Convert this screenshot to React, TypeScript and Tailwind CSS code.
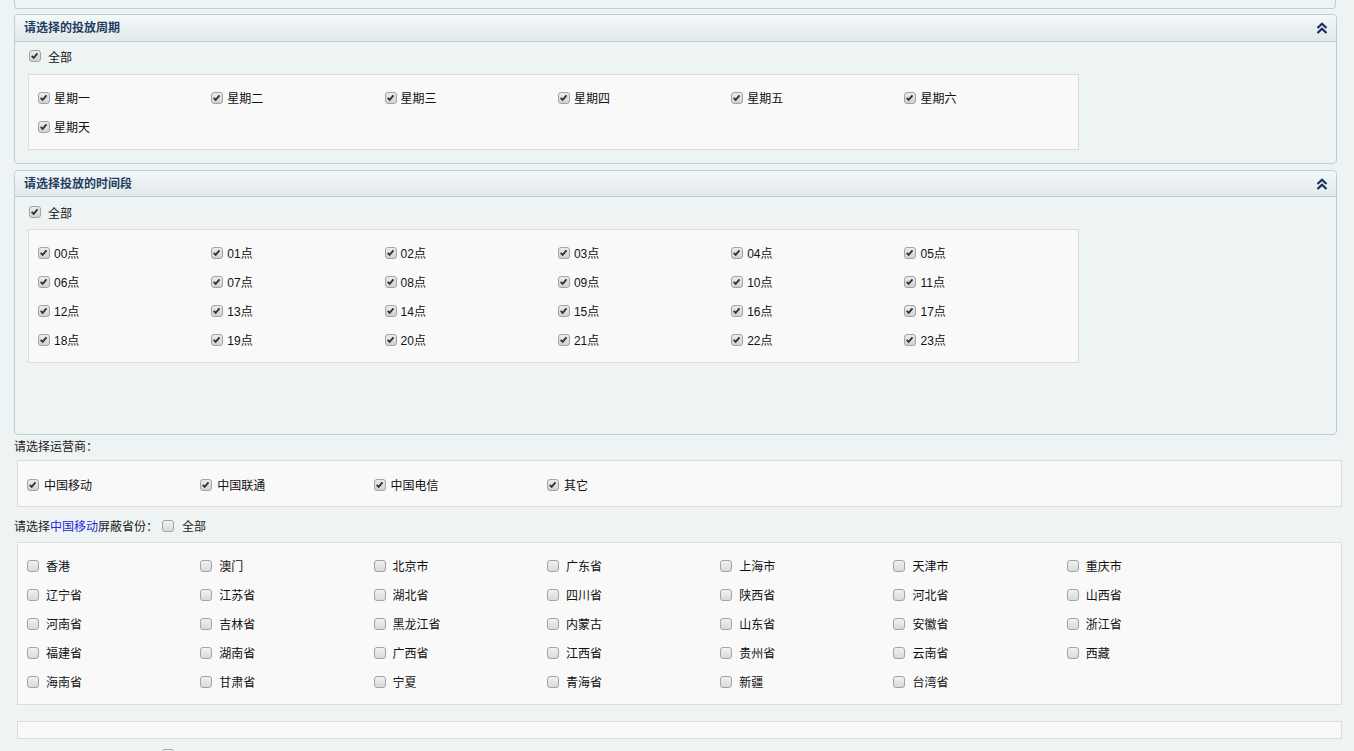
import React from "react";

const days = ["星期一", "星期二", "星期三", "星期四", "星期五", "星期六", "星期天"];
const hours = Array.from({ length: 24 }, (_, i) => `${String(i).padStart(2, "0")}点`);
const carriers = ["中国移动", "中国联通", "中国电信", "其它"];
const provinces = [
  "香港", "澳门", "北京市", "广东省", "上海市", "天津市", "重庆市",
  "辽宁省", "江苏省", "湖北省", "四川省", "陕西省", "河北省", "山西省",
  "河南省", "吉林省", "黑龙江省", "内蒙古", "山东省", "安徽省", "浙江省",
  "福建省", "湖南省", "广西省", "江西省", "贵州省", "云南省", "西藏",
  "海南省", "甘肃省", "宁夏", "青海省", "新疆", "台湾省",
];

function Box({ checked }: { checked?: boolean }) {
  return (
    <span
      className={
        "relative inline-block w-[12px] h-[12px] shrink-0 rounded-[3px] border border-[#a3a3a3] " +
        (checked
          ? "bg-gradient-to-b from-[#ececec] to-[#d2d2d2]"
          : "bg-gradient-to-b from-[#f1f1f1] to-[#dadada]")
      }
    >
      {checked && (
        <svg viewBox="0 0 12 12" className="absolute left-[0px] top-[0px] w-[10px] h-[10px]">
          <path d="M2 5.8 L4.4 8.2 L9 2.8" fill="none" stroke="#333" strokeWidth="2.2" />
        </svg>
      )}
    </span>
  );
}

function Item({ label, checked, gap }: { label: string; checked?: boolean; gap: string }) {
  return (
    <div className={"flex items-center h-[29px] " + gap}>
      <span className="-mt-[2px] flex">
        <Box checked={checked} />
      </span>
      <span className="leading-none whitespace-nowrap pt-[1px]">{label}</span>
    </div>
  );
}

function Chevrons() {
  return (
    <svg viewBox="0 0 12 12" className="w-[12px] h-[12px]">
      <polyline points="1.5,6 6,1.8 10.5,6" fill="none" stroke="#17305a" strokeWidth="2.2" />
      <polyline points="1.5,11 6,6.8 10.5,11" fill="none" stroke="#17305a" strokeWidth="2.2" />
    </svg>
  );
}

function Panel({
  title,
  items,
  head,
  body,
  gap,
}: {
  title: string;
  items: string[];
  head: string;
  body: string;
  gap: string;
}) {
  return (
    <div className="w-[1323px] border border-[#b7d1d7] rounded-[4px] bg-[#eef4f4]">
      <div
        className={
          "flex items-center justify-between pl-[9px] pr-[8px] border-b border-[#b7d1d7] rounded-t-[4px] bg-gradient-to-b from-[#f4f8f8] to-[#e1e9eb] " +
          head
        }
      >
        <span className="font-bold text-[12px] text-[#1f3d5e]">{title}</span>
        <Chevrons />
      </div>
      <div className={"flex flex-col " + body}>
        <div className={"flex items-center h-[20px] pl-[14px] gap-[7px] " + gap}>
          <span className="-mt-[2px] flex">
            <Box checked />
          </span>
          <span className="pt-[1px]">全部</span>
        </div>
        <div className="ml-[13px] w-[1051px] border border-[#dcdcdc] bg-[#f9f9f9] pl-[9px] pt-[9px] pb-[7px] grid grid-cols-[repeat(6,173.3px)]">
          {items.map((d) => (
            <Item key={d} label={d} checked gap="gap-[4px]" />
          ))}
        </div>
      </div>
    </div>
  );
}

export default function App() {
  return (
    <div
      className="min-h-screen bg-[#eef4f4] pl-[14px] text-[12px] text-[#111] overflow-hidden"
      style={{ fontFamily: '"Liberation Sans", "Noto Sans CJK SC", sans-serif' }}
    >
      <div className="h-[9px] w-[1322px] border-x border-b border-[#b7d1d7] rounded-b-[4px]" />
      <div className="pt-[5px]">
        <Panel
          title="请选择的投放周期"
          items={days}
          head="h-[27px]"
          body="h-[121px] pt-[5px]"
          gap="mb-[7px]"
        />
      </div>
      <div className="pt-[6px]">
        <Panel
          title="请选择投放的时间段"
          items={hours}
          head="h-[26px]"
          body="h-[237px] pt-[6px]"
          gap="mb-[6px]"
        />
      </div>

      <div className="mt-[2px] h-[20px] flex items-center text-[#222]">请选择运营商：</div>
      <div className="mt-[3px] ml-[3px] w-[1325px] border border-[#dcdcdc] bg-[#f9f9f9] pl-[9px] pt-[10px] pb-[6px] grid grid-cols-[repeat(7,173.3px)]">
        {carriers.map((c) => (
          <Item key={c} label={c} checked gap="gap-[5px]" />
        ))}
      </div>

      <div className="mt-[10px] h-[20px] flex items-center text-[#222]">
        <span>请选择</span>
        <span className="text-[#2424dc]">中国移动</span>
        <span>屏蔽省份：</span>
        <span className="ml-[4px] -mt-[2px] flex">
          <Box />
        </span>
        <span className="ml-[8px]">全部</span>
      </div>
      <div className="mt-[5px] ml-[3px] w-[1325px] border border-[#dcdcdc] bg-[#f9f9f9] pl-[9px] pt-[9px] pb-[7px] grid grid-cols-[repeat(7,173.3px)]">
        {provinces.map((p) => (
          <Item key={p} label={p} gap="gap-[7px]" />
        ))}
      </div>

      <div className="mt-[16px] ml-[3px] w-[1325px] h-[18px] border border-[#dcdcdc] bg-[#f9f9f9]" />

      <div className="mt-[10px] flex items-start">
        <span className="ml-[148px] flex">
          <Box />
        </span>
      </div>
    </div>
  );
}
